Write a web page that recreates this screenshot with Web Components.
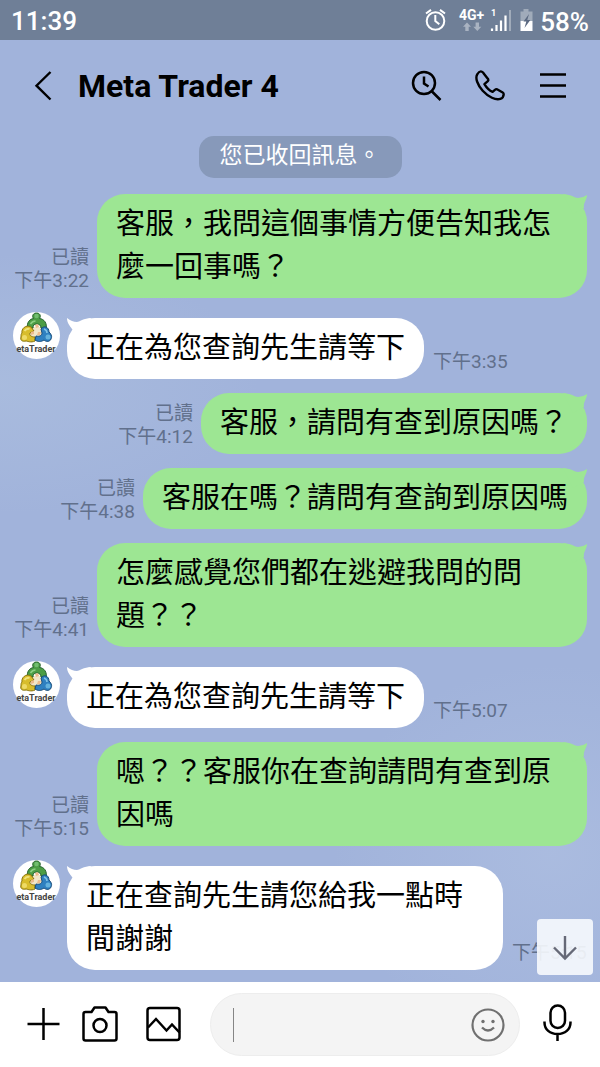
<!DOCTYPE html>
<html lang="zh-Hant">
<head>
<meta charset="utf-8">
<meta name="viewport" content="width=device-width, initial-scale=1">
<title>Meta Trader 4</title>
<style>
  body {
    margin: 0;
    font-family: Roboto, "Noto Sans CJK TC", sans-serif;
    color: #000;
  }
</style>
</head>
<body>
<chat-app>
  <status-bar slot="status" time="11:39" battery="58%"></status-bar>
  <chat-header slot="header">Meta Trader 4</chat-header>
  <system-notice>您已收回訊息。</system-notice>
  <chat-message kind="out" time="下午3:22">客服，我問這個事情方便告知我怎麼一回事嗎？</chat-message>
  <chat-message kind="in" time="下午3:35">正在為您查詢先生請等下</chat-message>
  <chat-message kind="out" time="下午4:12">客服，請問有查到原因嗎？</chat-message>
  <chat-message kind="out" time="下午4:38">客服在嗎？請問有查詢到原因嗎</chat-message>
  <chat-message kind="out" time="下午4:41">怎麼感覺您們都在逃避我問的問題？？</chat-message>
  <chat-message kind="in" time="下午5:07">正在為您查詢先生請等下</chat-message>
  <chat-message kind="out" time="下午5:15">嗯？？客服你在查詢請問有查到原因嗎</chat-message>
  <chat-message kind="in" time="下午5:15">正在查詢先生請您給我一點時間謝謝</chat-message>
  <scroll-down slot="overlay"></scroll-down>
  <message-composer slot="composer"></message-composer>
</chat-app>

<script>
class BaseElement extends HTMLElement {
  connectedCallback() {
    if (this.shadowRoot) return;
    this.attachShadow({ mode: 'open' }).innerHTML = this.render();
  }
}

const buttonReset = `
  button { display: grid; place-items: center; margin: 0; padding: 0; border: 0; background: none; color: inherit; font: inherit; }
  svg { display: block; overflow: visible; }
`;

customElements.define('chat-app', class extends BaseElement {
  render() {
    return `
      <style>
        :host {
          display: flex; flex-direction: column; min-height: 100vh;
          background:
            radial-gradient(ellipse 260px 130px at 0% 36%, rgba(180,200,226,.4), transparent),
            radial-gradient(ellipse 220px 190px at 92% 80%, rgba(184,200,230,.4), transparent),
            #a1b3db;
        }
        main { position: relative; flex: 1; display: flex; flex-direction: column; gap: 14px; padding: 3px 13px 12px; }
        ::slotted([slot=overlay]) { position: absolute; right: 7px; bottom: 7px; }
      </style>
      <slot name="status"></slot>
      <slot name="header"></slot>
      <main><slot></slot><slot name="overlay"></slot></main>
      <slot name="composer"></slot>`;
  }
});

customElements.define('status-bar', class extends BaseElement {
  render() {
    return `
      <style>
        :host { display: flex; align-items: center; height: 40px; padding: 0 11px; background: #6f7f97; color: #fff; font-size: 26px; font-weight: 500; }
        .time { flex: 1; padding-top: 2px; }
        .icons { display: flex; align-items: center; }
        .level { padding-top: 3px; font-size: 26px; }
        svg { display: block; }
        text { font: 700 14px Roboto, sans-serif; fill: #fff; }
        .small { font-size: 9px; }
      </style>
      <span class="time">${this.getAttribute('time')}</span>
      <span class="icons">
        <svg width="116" height="40" viewBox="424 0 116 40" fill="none" stroke="#fff" stroke-width="2" aria-hidden="true">
          <circle cx="435.500" cy="21" r="8.800"/>
          <path d="M435.300 15v6l4 3.200M426 13.500l5-3.600M445 13.500l-5-3.600"/>
          <text x="459" y="20" stroke="none">4G+</text>
          <path fill="#a9b3c2" stroke="none" d="M467 22.500l4 4.300h-2.300v4.200h-3.400v-4.200H463zM477.300 31l-4-4.300h2.300v-4.200h3.400v4.200h2.300z"/>
          <text class="small" x="491" y="16" stroke="none">1</text>
          <path d="M492 28.500V31M496.500 25v6M501 20.500V31M505.500 15.500V31" stroke-width="2.200"/>
          <path d="M510 10v21" stroke="#a0abba" stroke-width="2"/>
          <path fill="#a0abba" stroke="none" d="M523.500 9h5v2.500h4V21h-12v-9.500h3z"/>
          <path fill="#fff" stroke="none" d="M520.500 21h12v10h-12z"/>
          <path fill="#5c6a82" stroke="none" d="M529 14l-5.500 7.500h2.800L524.500 28l5.800-8h-3z"/>
        </svg>
        <span class="level">${this.getAttribute('battery')}</span>
      </span>`;
  }
});

customElements.define('chat-header', class extends BaseElement {
  render() {
    return `
      <style>
        ${buttonReset}
        :host { display: flex; align-items: center; height: 93px; padding: 0 31px 0 27px; }
        h1 { flex: 1; margin: 0 0 2px 19px; font-size: 32px; line-height: 40px; font-weight: 700; }
        nav { display: flex; gap: 31px; }
        button { width: 32px; height: 40px; }
      </style>
      <button aria-label="返回"><svg width="32" height="40" viewBox="0 0 32 40" fill="none" stroke="#000" stroke-width="2.400"><path d="M23.500 5L9.500 18.700l14 13.800"/></svg></button>
      <h1><slot></slot></h1>
      <nav>
        <button aria-label="搜尋"><svg width="32" height="40" viewBox="0 0 32 40" fill="none" stroke="#000" stroke-width="2.500"><circle cx="13" cy="16" r="11"/><path d="M13 9.500v7l4.500 3M20.500 24l9 9"/></svg></button>
        <button aria-label="通話"><svg width="32" height="40" viewBox="0 0 32 40" fill="none" stroke="#000" stroke-width="2.400" stroke-linejoin="round"><path d="M8 4.700C6.500 3.900 4.500 5.200 3.200 7.300 1 11 3.500 18 8.700 23.700c5.700 6.200 13 9.800 17.600 8.200 2-.7 3.300-2.700 3.400-4.700 0-.7-.3-1.300-1-1.700l-5.700-3.200c-.7-.3-1.300-.1-1.800.4l-2.600 2.200c-2.300-1-6.400-4.800-8.200-7.800l3.400-3c.6-.6.7-1.300.4-1.900L9.500 6.200C9.200 5.400 8.600 5 8 4.700z"/></svg></button>
        <button aria-label="選單"><svg width="32" height="40" viewBox="0 0 32 40" fill="none" stroke="#000" stroke-width="2.500"><path d="M3 7.500h26M3 18.500h26M3 29.500h26"/></svg></button>
      </nav>`;
  }
});

customElements.define('system-notice', class extends BaseElement {
  render() {
    return `
      <style>
        :host { display: block; align-self: center; margin-bottom: 2px; padding: 0 21px; border-radius: 15px; background: #8799ba; color: #fff; font-size: 23px; line-height: 40px; }
        p { margin: 0; height: 42px; }
      </style>
      <p><slot></slot></p>`;
  }
});

customElements.define('trader-avatar', class extends BaseElement {
  render() {
    return `
      <style>
        :host { display: block; flex: none; width: 47px; height: 47px; border-radius: 50%; background: #fff; }
        svg { display: block; overflow: visible; }
        text { font: 700 9px Roboto, sans-serif; fill: #444; }
      </style>
      <svg width="47" height="47" viewBox="0 0 47 47" role="img" aria-label="MetaTrader">
        <path fill="#f1e6c8" d="M15 15h17v12H15z"/>
        <path fill="#4c9d45" stroke="#22602c" d="M14.500 16.500C13.500 10 17 7 20.500 6.500c-2-3 0-5.500 3-5.500s5 2.500 3 5.500c4.500.5 8 4.500 6.500 11l-5-1.500c0-3-2-4-4.500-4s-3.500 1.500-3.500 4z"/>
        <path fill="#d8bd2c" stroke="#87730f" d="M9 21c-1-4 4-9 9-6l3 4-4 2c-1 2 1 4 5 4v4c-4 2-8 0-9 0-4 1-6-1-5-4 0-2 0-3 1-4z"/>
        <path fill="#2f80c0" stroke="#174b79" d="M28 17c3-4 8-2 8 3 3 3 3 5 2 7-1 3-5 3-7 1-3 2-6 2-9 0l1-4c4 1 6-1 6-3z"/>
        <circle cx="23.500" cy="4" r="2.200" fill="#72bd70"/>
        <circle cx="11.500" cy="25.500" r="2.500" fill="#eedb67"/>
        <circle cx="35" cy="25" r="2.500" fill="#65b2dd"/>
        <path stroke="#8ccf83" stroke-width="1.500" fill="none" d="M17.500 12q2-3 5-3"/>
        <path stroke="#f1e27a" stroke-width="2" fill="none" d="M11.500 19q2-3 5-2"/>
        <path stroke="#80c2e7" stroke-width="1.500" fill="none" d="M31 17q3 1 3 4"/>
        <path fill="#eebc8d" d="M22 13l3-1 1 3-3 1zM18 20l3-1 0 3-3 1zM25 20l3 0-1 3-3 0z"/>
        <text x="23" y="40" text-anchor="middle">etaTrader</text>
      </svg>`;
  }
});

customElements.define('chat-message', class extends BaseElement {
  render() {
    const out = this.getAttribute('kind') === 'out';
    const tail = out
      ? 'M0 0C7 0 12 4 15 4Q20 4 24 1C24 6 20 9 21 14L10 20Z'
      : 'M24 0C17 0 12 4 10 4Q5 4 0 0C0 5 3 8 5 11L14 20Z';
    return `
      <style>
        :host { display: flex; align-items: flex-start; font-size: 29px; line-height: 43px; }
        .row { flex: 1; min-width: 0; display: flex; align-items: flex-end; gap: 9px; }
        .bubble { position: relative; box-sizing: border-box; margin: 0; padding: 9px 19px; border-radius: 28px; }
        .bubble svg { position: absolute; top: 0; }
        .meta { flex: none; padding-bottom: 6px; color: #61708c; font-size: 19px; line-height: 23px; text-align: right; white-space: nowrap; }
        .meta span { display: block; }
        .out { flex-direction: row-reverse; gap: 8px; }
        .out .bubble { max-width: 490px; background: #9de693; }
        .out svg { right: 0; fill: #9de693; }
        .in { padding: 6px 0 0 7px; }
        .in .bubble { max-width: 436px; background: #fff; }
        .in svg { left: 0; fill: #fff; }
      </style>
      ${out ? '' : '<trader-avatar></trader-avatar>'}
      <div class="row ${out ? 'out' : 'in'}">
        <p class="bubble"><svg width="24" height="20" viewBox="0 0 24 20" aria-hidden="true"><path d="${tail}"/></svg><slot></slot></p>
        <div class="meta">${out ? '<span>已讀</span>' : ''}<span>${this.getAttribute('time')}</span></div>
      </div>`;
  }
});

customElements.define('scroll-down', class extends BaseElement {
  render() {
    return `
      <style>
        ${buttonReset}
        :host { display: block; }
        button { width: 56px; height: 56px; border-radius: 4px; background: rgba(247,249,253,.9); }
      </style>
      <button aria-label="捲動至最新訊息"><svg width="56" height="56" viewBox="0 0 56 56" fill="none" stroke="#666977" stroke-width="2.400"><path d="M28 17v22M17 28.500L28 39.500l11-11"/></svg></button>`;
  }
});

customElements.define('message-composer', class extends BaseElement {
  render() {
    return `
      <style>
        ${buttonReset}
        :host { display: flex; align-items: center; box-sizing: border-box; height: 85px; padding: 0 24px; background: #fff; }
        .tools { display: flex; gap: 22px; margin-right: 28px; }
        button { width: 38px; height: 40px; }
        .field { flex: 1; min-width: 0; display: flex; align-items: center; box-sizing: border-box; height: 63px; margin-right: 18px; padding: 0 12px 0 22px; border: 1px solid #ededed; border-radius: 32px; background: #f4f4f4; }
        .caret { width: 1px; height: 34px; background: #858585; }
        input { flex: 1; min-width: 0; height: 40px; padding: 0; border: 0; outline: 0; background: none; font: inherit; font-size: 26px; }
      </style>
      <div class="tools">
        <button aria-label="更多"><svg width="38" height="40" viewBox="0 1 38 40" fill="none" stroke="#000" stroke-width="2.500"><path d="M19.500 4v32M3.500 20h32"/></svg></button>
        <button aria-label="相機"><svg width="38" height="40" viewBox="3 1 38 40" fill="none" stroke="#000" stroke-width="2.500" stroke-linejoin="round"><path d="M4.500 8h6l3-4.500h11L27.500 8h6q2 0 2 2v24.500q0 2-2 2h-29q-2 0-2-2V10q0-2 2-2z"/><circle cx="19" cy="21.500" r="6.500"/></svg></button>
        <button aria-label="圖片"><svg width="38" height="40" viewBox="0 1 38 40" fill="none" stroke="#000" stroke-width="2.500"><rect x="3.500" y="4" width="32" height="32" rx="2.500"/><path d="M4 23.500l8-8.500 10.500 11.500 5.500-6 7.500 8"/></svg></button>
      </div>
      <div class="field">
        <span class="caret"></span>
        <input type="text" aria-label="輸入訊息">
        <button aria-label="貼圖"><svg width="38" height="40" viewBox="0 0 38 40" fill="none" stroke="#707070" stroke-width="2.200"><circle cx="19" cy="20" r="15.500"/><path d="M13 22.500q6 6 12 0" stroke-width="2.400"/><circle cx="14" cy="16.500" r="1.700" fill="#707070" stroke="none"/><circle cx="24" cy="16.500" r="1.700" fill="#707070" stroke="none"/></svg></button>
      </div>
      <button aria-label="語音"><svg width="38" height="40" viewBox="0 2 38 40" fill="none" stroke="#000" stroke-width="2.500"><rect x="12.500" y="2.500" width="14.500" height="22.500" rx="7.200"/><path d="M6.500 18.500v1c0 7 5.500 11.500 13 11.500s13-4.500 13-11.500v-1M19.500 31v7"/></svg></button>`;
  }
});
</script>
</body>
</html>
